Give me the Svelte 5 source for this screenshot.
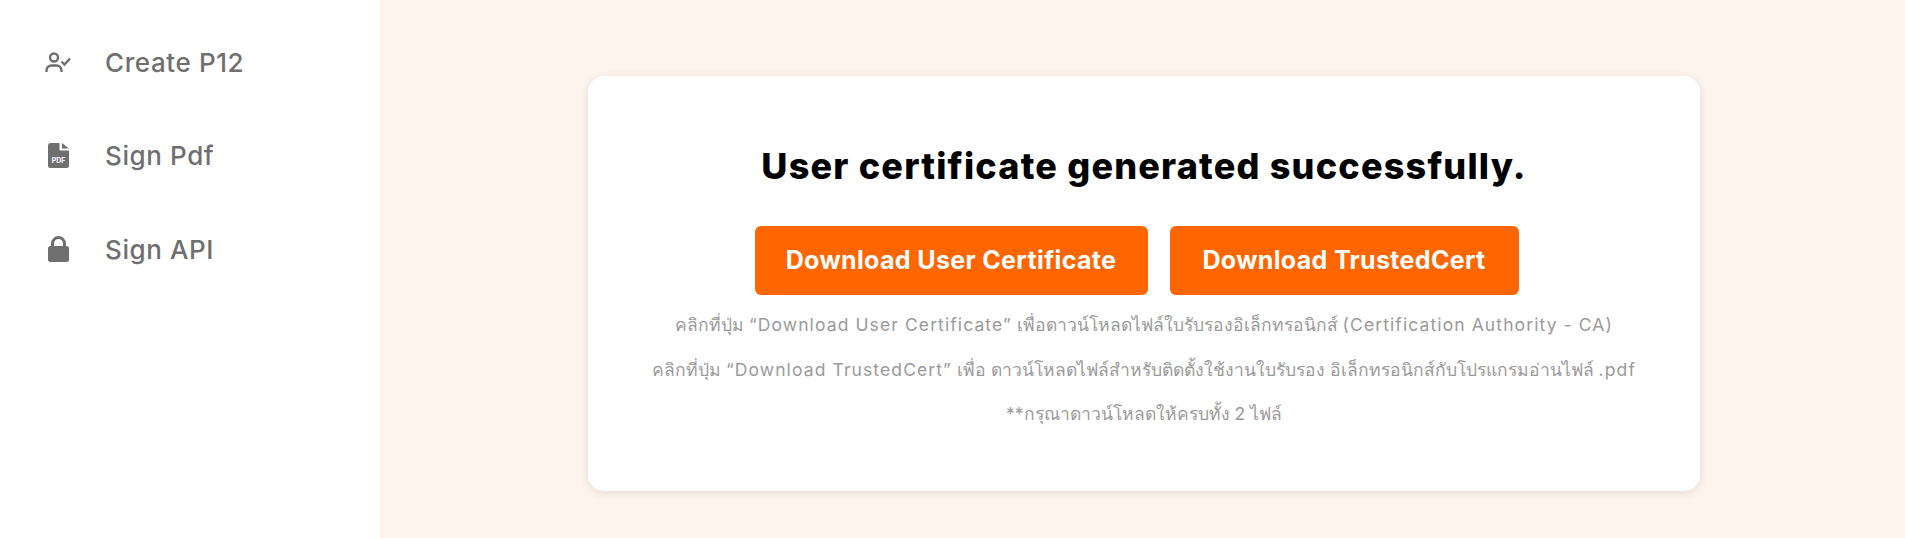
<script>
  const items = [
    { label: 'Create P12', icon: 'user' },
    { label: 'Sign Pdf', icon: 'pdf' },
    { label: 'Sign API', icon: 'lock' }
  ];
</script>

<div class="page">
  <aside class="sidebar">
    {#each items as item}
      <a class="nav" href="#top">
        <span class="icon">
          {#if item.icon === 'user'}
            <svg width="26" height="20" viewBox="0 0 26 20" fill="none" stroke="#6f6f6f" stroke-width="2.400">
              <circle cx="9" cy="5.500" r="4" />
              <path d="M1.500 20v-1.500a5 5 0 0 1 5-5h5a5 5 0 0 1 5 5V20" />
              <path d="M16.500 9.500l3 3 5.500-6" />
            </svg>
          {:else if item.icon === 'pdf'}
            <svg width="21" height="25" viewBox="0 0 21 25">
              <path fill="#6f6f6f" d="M2.500 0H11.500v7.500H21v15a2.500 2.500 0 0 1-2.500 2.500h-16A2.500 2.500 0 0 1 0 22.500v-20A2.500 2.500 0 0 1 2.500 0z" />
              <path fill="#6f6f6f" d="M14 0l7 5.500h-7z" />
              <text x="10.500" y="19.500" text-anchor="middle" class="pdf">PDF</text>
            </svg>
          {:else}
            <svg width="21" height="26" viewBox="0 0 21 26">
              <path fill="none" stroke="#6f6f6f" stroke-width="3" d="M4.500 12V7.500a6 6 0 0 1 12 0V12" />
              <rect x="0" y="10" width="21" height="16" rx="2.500" fill="#6f6f6f" />
            </svg>
          {/if}
        </span>
        <span class="label">{item.label}</span>
      </a>
    {/each}
  </aside>

  <main class="main">
    <section class="card">
      <h1>User certificate generated successfully.</h1>
      <div class="actions">
        <button class="btn user">Download User Certificate</button>
        <button class="btn trusted">Download TrustedCert</button>
      </div>
      <p>คลิกที่ปุ่ม <span class="lat">“Download User Certificate”</span> เพื่อดาวน์โหลดไฟล์ใบรับรองอิเล็กทรอนิกส์ <span class="lat">(Certification Authority - CA)</span></p>
      <p>คลิกที่ปุ่ม <span class="lat">“Download TrustedCert”</span> เพื่อ ดาวน์โหลดไฟล์สำหรับติดตั้งใช้งานใบรับรอง อิเล็กทรอนิกส์กับโปรแกรมอ่านไฟล์ <span class="lat">.pdf</span></p>
      <p>**กรุณาดาวน์โหลดให้ครบทั้ง 2 ไฟล์</p>
    </section>
  </main>
</div>

<style>
  :global(body) {
    margin: 0;
    background: #fdf4ee;
    overflow: hidden;
  }
  .page {
    display: flex;
    height: 538px;
    font-family: Inter, "Noto Sans", "Liberation Sans", sans-serif;
  }
  .sidebar {
    width: 380px;
    flex: none;
    background: #fff;
    padding-top: 27px;
    box-sizing: border-box;
  }
  .nav {
    display: flex;
    align-items: center;
    height: 70px;
    margin-bottom: 23.600px;
    padding-left: 44px;
    text-decoration: none;
  }
  .icon {
    width: 28px;
    margin-right: 33px;
    display: flex;
    justify-content: center;
    align-items: center;
  }
  .label {
    font-size: 26px;
    font-weight: 500;
    letter-spacing: 0.6px;
    color: #6f6f6f;
  }
  .pdf {
    font-size: 7px;
    font-weight: 700;
    fill: #fff;
  }
  .main {
    flex: 1;
    padding: 76px 205px 0 208px;
    box-sizing: border-box;
  }
  .card {
    height: 415px;
    background: #fff;
    border-radius: 16px;
    box-shadow: 0 2px 10px rgba(0, 0, 0, 0.1);
    padding-top: 66px;
    box-sizing: border-box;
    text-align: center;
  }
  h1 {
    margin: 0 0 35px;
    font-size: 36px;
    line-height: 49px;
    font-weight: 800;
    letter-spacing: 1.200px;
    color: #000;
  }
  .actions {
    display: flex;
    justify-content: center;
    gap: 22px;
    margin-bottom: 15px;
    padding-right: 15px;
  }
  .btn {
    height: 69px;
    border: 0;
    border-radius: 6px;
    background: #ff6600;
    color: #fff;
    font: 700 25px Inter, "Noto Sans", sans-serif;
    letter-spacing: 0.35px;
    padding: 0 0 2px;
  }
  .user { width: 393px; }
  .trusted { width: 349px; }
  p {
    margin: 0 0 15.500px;
    font-size: 17.500px;
    line-height: 29px;
    color: #9a9a9a;
  }
  .lat {
    letter-spacing: 1.100px;
  }
</style>
